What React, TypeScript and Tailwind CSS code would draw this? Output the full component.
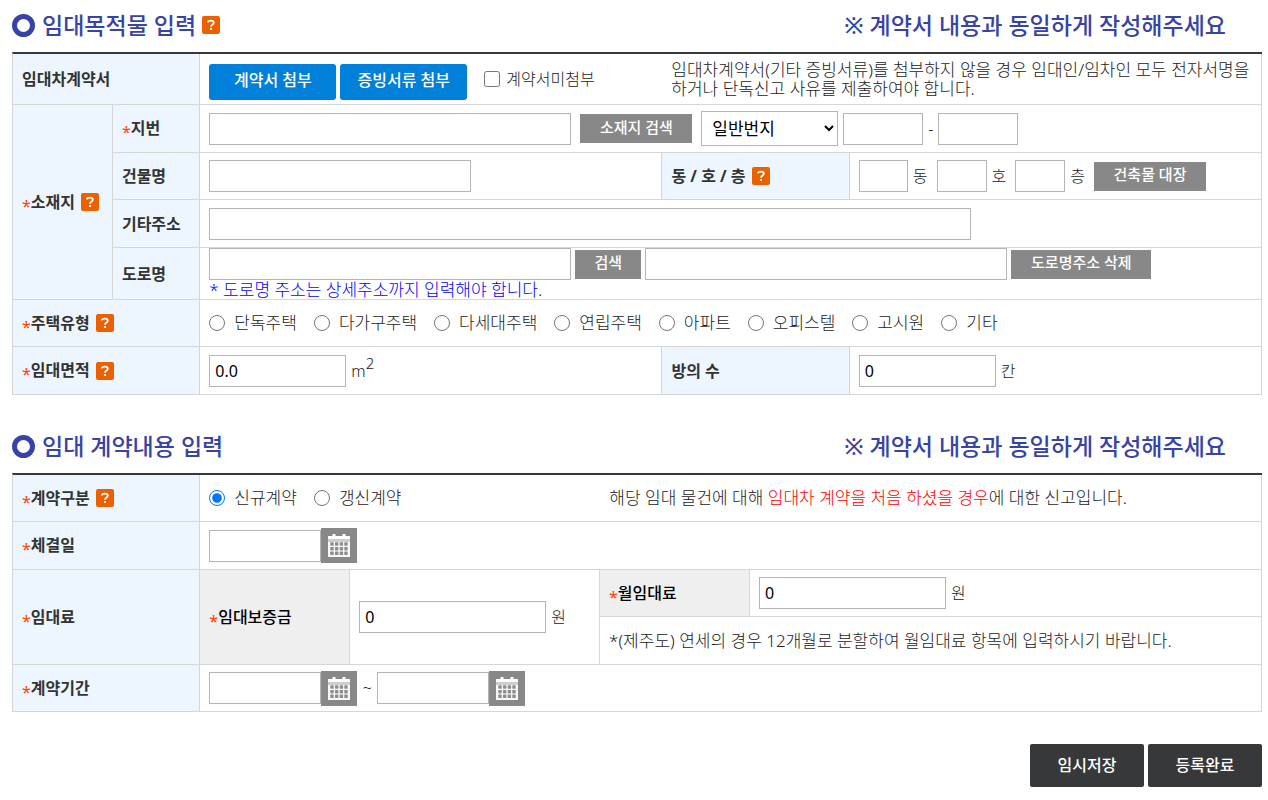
import React, { useState } from 'react';

interface OptionProps {
  name: string;
  label: string;
  checked: boolean;
  onChange: () => void;
}

interface FieldProps {
  label: string;
  className: string;
  defaultValue?: string;
}

interface LabelTextProps {
  text: string;
  required?: boolean;
  help?: boolean;
}

const houseTypes = [
  '단독주택',
  '다가구주택',
  '다세대주택',
  '연립주택',
  '아파트',
  '오피스텔',
  '고시원',
  '기타'
];

const contractTypes = ['신규계약', '갱신계약'];

const HelpButton: React.FC = () => (
  <button
    type="button"
    aria-label="도움말"
    className="inline-flex h-[18px] w-[18px] shrink-0 items-center justify-center rounded-xs bg-[#eb6100] align-middle"
  >
    <svg width="10" height="12" viewBox="0 0 10 12" fill="none" stroke="#fff" strokeWidth="1.8">
      <path d="M1.9 3.4C2.2 2.1 3.4 1.7 4.9 1.7 6.7 1.7 7.8 2.5 7.8 3.8 7.8 5.5 5 5.4 5 7.7" />
      <path d="M4 10h2" />
    </svg>
  </button>
);

const CalendarButton: React.FC = () => (
  <button
    type="button"
    aria-label="달력"
    className="flex h-[35px] w-9 shrink-0 items-center justify-center bg-[#888]"
  >
    <svg width="22" height="23" viewBox="0 0 22 23">
      <path d="M0 2h22v3.5H0z M4.5 0h3v3h-3z M14.5 0h3v3h-3z" fill="#fff" />
      <path d="M0 5.5h22v2.3H0z" fill="#d0d0d0" />
      <path d="M0 7.8h22V23H0z" fill="#f8f8f8" />
      {[8.3, 13, 17.6].map((y) =>
        [2.3, 7, 11.7, 16.3].map((x) => (
          <rect key={`${x}-${y}`} x={x} y={y} width="3.4" height="3.4" rx="0.6" fill="#8d8d8d" />
        ))
      )}
    </svg>
  </button>
);

const Field: React.FC<FieldProps> = ({ label, className, defaultValue }) => (
  <input
    type="text"
    aria-label={label}
    defaultValue={defaultValue}
    className={`h-8 min-w-0 border border-[#b5b5b5] bg-white px-[5px] text-base font-normal text-black ${className}`}
  />
);

const GrayButton: React.FC<{ children: string; className: string }> = ({ children, className }) => (
  <button
    type="button"
    className={`h-[29px] shrink-0 bg-[#888] pb-1 text-[15px] leading-6 font-medium whitespace-nowrap text-white ${className}`}
  >
    {children}
  </button>
);

const RadioOption: React.FC<OptionProps> = ({ name, label, checked, onChange }) => (
  <label className="flex items-center gap-[9px] text-[17px]">
    <input type="radio" name={name} checked={checked} onChange={onChange} className="size-4" />
    {label}
  </label>
);

const LabelText: React.FC<LabelTextProps> = ({ text, required, help }) => (
  <div className="flex items-center gap-[6px]">
    <span>
      {required && <span className="align-sub leading-none font-normal text-[#ff4200]">*</span>}
      {text}
    </span>
    {help && <HelpButton />}
  </div>
);

const SectionTitle: React.FC<{ title: string; help?: boolean }> = ({ title, help }) => (
  <header className="flex h-[52px] items-center justify-between pr-9 pb-[2px] text-[23px] font-medium text-[#3743a5]">
    <h2 className="flex items-center">
      <span className="mr-[7px] size-[23px] rounded-full border-[5px] border-[#3743a5]" />
      <span className="mr-[6px]">{title}</span>
      {help && <HelpButton />}
    </h2>
    <p>※ 계약서 내용과 동일하게 작성해주세요</p>
  </header>
);

const tableClass =
  'w-full table-fixed border-separate border-spacing-0 border-t-2 border-l border-t-[#37383a] border-l-[#d6d6d6]';
const cell = 'border-r border-b border-[#d6d6d6] px-[9px] py-0 text-left';
const head = `${cell} bg-[#edf6fe] text-base font-bold text-[#333]`;
const subHead = `${cell} bg-[#efefef] text-base font-medium text-black`;
const row = 'flex items-center';
const attachButton = 'mt-[6px] h-9 w-[127px] rounded-[3px] bg-[#0080d8] pb-1 font-medium text-white';
const submitButton = 'h-[43px] w-[114px] rounded-xs bg-[#37383a] pb-[2px] font-medium text-white';

export const App: React.FC = () => {
  const [houseType, setHouseType] = useState<string>('');
  const [contractType, setContractType] = useState<string>('신규계약');

  return (
    <main
      lang="ko"
      className="bg-white pr-[6px] pb-3 pl-3 font-['Noto_Sans','Noto_Sans_CJK_KR',sans-serif] text-base leading-5 font-light break-keep text-[#222]"
    >
      <section>
        <SectionTitle title="임대목적물 입력" help />
        <table className={tableClass}>
          <colgroup>
            <col className="w-[8%]" />
            <col className="w-[7%]" />
            <col className="w-[37%]" />
            <col className="w-[15%]" />
            <col className="w-[33%]" />
          </colgroup>
          <tbody>
            <tr className="h-[51px]">
              <th colSpan={2} className={head}>임대차계약서</th>
              <td colSpan={3} className={cell}>
                <div className={row}>
                  <div className="flex shrink-0 gap-1">
                    <button type="button" className={attachButton}>계약서 첨부</button>
                    <button type="button" className={attachButton}>증빙서류 첨부</button>
                  </div>
                  <label className="ml-[17px] flex w-[187px] shrink-0 items-center gap-[6px] whitespace-nowrap">
                    <input type="checkbox" className="size-4" />
                    계약서미첨부
                  </label>
                  <p className="text-[17px] leading-[19px]">
                    임대차계약서(기타 증빙서류)를 첨부하지 않을 경우 임대인/임차인 모두 전자서명을 하거나 단독신고 사유를 제출하여야 합니다.
                  </p>
                </div>
              </td>
            </tr>
            <tr className="h-12">
              <th rowSpan={4} className={head}><LabelText text="소재지" required help /></th>
              <th className={head}><LabelText text="지번" required /></th>
              <td colSpan={3} className={cell}>
                <div className={row}>
                  <Field label="지번" className="mr-[9px] w-[362px]" />
                  <GrayButton className="w-28">소재지 검색</GrayButton>
                  <select
                    aria-label="번지 구분"
                    className="mr-[5px] ml-[9px] h-[35px] w-[137px] border border-[#b5b5b5] bg-white px-[6px] text-[17px] font-normal text-black"
                  >
                    <option>일반번지</option>
                    <option>산번지</option>
                  </select>
                  <Field label="본번" className="w-20" />
                  <span className="w-[15px] text-center">-</span>
                  <Field label="부번" className="w-20" />
                </div>
              </td>
            </tr>
            <tr className="h-[47px]">
              <th className={head}>건물명</th>
              <td className={cell}>
                <div className={row}><Field label="건물명" className="w-[262px]" /></div>
              </td>
              <th className={head}><LabelText text="동 / 호 / 층" help /></th>
              <td className={cell}>
                <div className={`${row} gap-[9px]`}>
                  <div className={`${row} gap-[5px]`}><Field label="동" className="w-[49px]" />동</div>
                  <div className={`${row} gap-[5px]`}><Field label="호" className="w-[50px]" />호</div>
                  <div className={`${row} gap-[5px]`}><Field label="층" className="w-[50px]" />층</div>
                  <GrayButton className="w-28">건축물 대장</GrayButton>
                </div>
              </td>
            </tr>
            <tr className="h-12">
              <th className={head}>기타주소</th>
              <td colSpan={3} className={cell}>
                <div className={row}><Field label="기타주소" className="w-[762px]" /></div>
              </td>
            </tr>
            <tr className="h-[52px]">
              <th className={head}>도로명</th>
              <td colSpan={3} className={cell}>
                <div className={`${row} gap-1`}>
                  <Field label="도로명" className="w-[362px]" />
                  <GrayButton className="w-[66px]">검색</GrayButton>
                  <Field label="도로명 상세주소" className="w-[362px]" />
                  <GrayButton className="w-[140px]">도로명주소 삭제</GrayButton>
                </div>
                <p className="text-[17px] leading-[19px] text-[#0000ff]">* 도로명 주소는 상세주소까지 입력해야 합니다.</p>
              </td>
            </tr>
            <tr className="h-[47px]">
              <th colSpan={2} className={head}><LabelText text="주택유형" required help /></th>
              <td colSpan={3} className={cell}>
                <div className={`${row} gap-[17px]`}>
                  {houseTypes.map((type) => (
                    <RadioOption
                      key={type}
                      name="houseType"
                      label={type}
                      checked={houseType === type}
                      onChange={() => setHouseType(type)}
                    />
                  ))}
                </div>
              </td>
            </tr>
            <tr className="h-12">
              <th colSpan={2} className={head}><LabelText text="임대면적" required help /></th>
              <td className={cell}>
                <div className={`${row} gap-[5px]`}>
                  <Field label="임대면적" defaultValue="0.0" className="w-[137px]" />
                  <span>m<sup className="text-[15px]">2</sup></span>
                </div>
              </td>
              <th className={head}>방의 수</th>
              <td className={cell}>
                <div className={`${row} gap-[5px]`}>
                  <Field label="방의 수" defaultValue="0" className="w-[137px]" />칸
                </div>
              </td>
            </tr>
          </tbody>
        </table>
      </section>

      <section className="mt-[26px]">
        <SectionTitle title="임대 계약내용 입력" />
        <table className={tableClass}>
          <colgroup>
            <col className="w-[15%]" />
            <col className="w-[12%]" />
            <col className="w-[20%]" />
            <col className="w-[12%]" />
            <col className="w-[41%]" />
          </colgroup>
          <tbody>
            <tr className="h-[47px]">
              <th className={head}><LabelText text="계약구분" required help /></th>
              <td colSpan={4} className={cell}>
                <div className={row}>
                  <div className={`${row} w-[400px] gap-[17px]`}>
                    {contractTypes.map((type) => (
                      <RadioOption
                        key={type}
                        name="contractType"
                        label={type}
                        checked={contractType === type}
                        onChange={() => setContractType(type)}
                      />
                    ))}
                  </div>
                  <p className="text-[17px]">
                    해당 임대 물건에 대해 <span className="text-[#ff0000]">임대차 계약을 처음 하셨을 경우</span>에 대한 신고입니다.
                  </p>
                </div>
              </td>
            </tr>
            <tr className="h-12">
              <th className={head}><LabelText text="체결일" required /></th>
              <td colSpan={4} className={cell}>
                <div className={row}>
                  <Field label="체결일" className="w-28" />
                  <CalendarButton />
                </div>
              </td>
            </tr>
            <tr className="h-[47px]">
              <th rowSpan={2} className={head}><LabelText text="임대료" required /></th>
              <th rowSpan={2} className={subHead}><LabelText text="임대보증금" required /></th>
              <td rowSpan={2} className={cell}>
                <div className={`${row} gap-[5px]`}>
                  <Field label="임대보증금" defaultValue="0" className="w-[187px]" />원
                </div>
              </td>
              <th className={subHead}><LabelText text="월임대료" required /></th>
              <td className={cell}>
                <div className={`${row} gap-[5px]`}>
                  <Field label="월임대료" defaultValue="0" className="w-[187px]" />원
                </div>
              </td>
            </tr>
            <tr className="h-12">
              <td colSpan={2} className={`${cell} text-[17px]`}>
                *(제주도) 연세의 경우 12개월로 분할하여 월임대료 항목에 입력하시기 바랍니다.
              </td>
            </tr>
            <tr className="h-[47px]">
              <th className={head}><LabelText text="계약기간" required /></th>
              <td colSpan={4} className={cell}>
                <div className={row}>
                  <Field label="계약 시작일" className="w-28" />
                  <CalendarButton />
                  <span className="w-5 text-center">~</span>
                  <Field label="계약 종료일" className="w-28" />
                  <CalendarButton />
                </div>
              </td>
            </tr>
          </tbody>
        </table>
      </section>

      <div className="mt-8 flex justify-end gap-1">
        <button type="button" className={submitButton}>임시저장</button>
        <button type="button" className={submitButton}>등록완료</button>
      </div>
    </main>
  );
};

export default App;
